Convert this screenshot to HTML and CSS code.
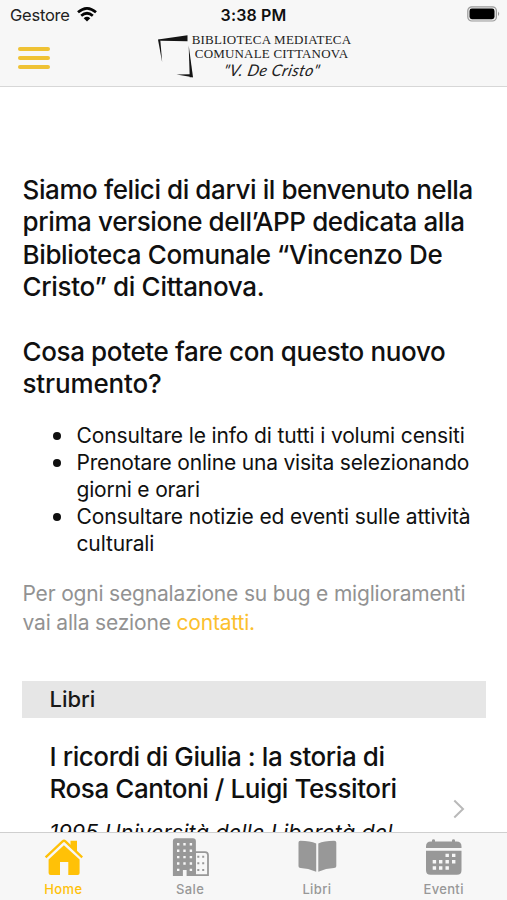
FILE: index.html
```html
<!DOCTYPE html>
<html lang="it">
<head>
<meta charset="utf-8">
<meta name="viewport" content="width=device-width, initial-scale=1">
<title>Biblioteca Comunale Cittanova</title>
<link rel="stylesheet" href="styles.css">
</head>
<body>
<header class="header">
  <div class="status">
    <div class="carrier"><span>Gestore</span>
      <svg class="wifi" width="20" height="15" viewBox="0 0 20 15"><g fill="none" stroke="#050505" stroke-width="2.7"><path d="M1 5.3Q10-2.5 19 5.3"/><path d="M4.2 8.8Q10 3.7 15.8 8.8"/></g><path d="M6.7 11.2Q10 8.5 13.3 11.2L10 14.5Z" fill="#050505"/></svg>
    </div>
    <time class="clock">3:38 PM</time>
    <svg class="battery" width="33" height="16" viewBox="0 0 33 16"><rect x=".8" y=".8" width="28.600" height="14.200" rx="4" fill="#ededed" stroke="#9b9b9b" stroke-width="1.2"/><rect x="2.500" y="2.600" width="25" height="10.600" rx="2.400"/><path d="M31 5.5q2.4 2.3 0 4.6z" fill="#999"/></svg>
  </div>
  <div class="brandbar">
    <button class="menu" aria-label="Menu"><i></i><i></i><i></i></button>
    <div class="brand">
      <svg class="mark" width="38" height="46" viewBox="0 0 38 46" fill="#151515"><path d="M1 5.500 30.500 1.300V7.300L3.500 6.700Z"/><path d="M1 5.500 3.300 6 5.200 28.500Z"/><path d="M31.700 11.500 36 43.200H32.700Z"/><path d="M19.500 40.500 33 40.200 36 43.200Z"/></svg>
      <div class="brand-text"><span class="b1">BIBLIOTECA MEDIATECA</span><span class="b2">COMUNALE CITTANOVA</span>
      <span class="b3">"V. De Cristo"</span></div>
    </div>
  </div>
</header>
<main class="content">
  <h1 class="title intro"><span class="w1">Siamo felici di darvi il benvenuto nella</span><br><span class="w2">prima versione dell’APP dedicata alla</span><br><span class="w3">Biblioteca Comunale “Vincenzo De</span><br><span class="w4">Cristo” di Cittanova.</span><br><br><span class="w5">Cosa potete fare con questo nuovo</span><br><span class="w6">strumento?</span></h1>
  <ul class="features">
    <li>Consultare le info di tutti i volumi censiti</li>
    <li class="tight">Prenotare online una visita selezionando<br>giorni e orari</li>
    <li>Consultare notizie ed eventi sulle attività<br>culturali</li>
  </ul>
  <p class="note">Per ogni segnalazione su bug e miglioramenti<br>vai alla sezione <a class="link">contatti.</a></p>
  <h2 class="section">Libri</h2>
  <article class="book">
    <div class="book-text">
      <h3 class="title book-title">I ricordi di Giulia : la storia di<br>Rosa Cantoni / Luigi Tessitori</h3>
      <p class="publisher">1995 Università delle Liberetà del</p>
    </div>
    <svg class="chevron" width="12" height="20" viewBox="0 0 12 20"><path d="M1.300 1.500 10 10 1.300 18.500" fill="none" stroke="#b9b9b9" stroke-width="2"/></svg>
  </article>
</main>
<nav class="tabs">
  <a class="tab active"><svg width="40" height="40" viewBox="0 0 40 40" fill="currentColor"><path d="M20.900 8.300 36.600 22.500V36q0 2-2 2H25.300V25H17v13H7.600q-2 0-2-2V22.500Z"/><path d="M27.500 3.800H34v12l-6.500-5.500Z"/><path d="M2.600 20.300 19.600 4.400q1.400-1.200 2.800 0L39.200 20.300" fill="none" stroke="currentColor" stroke-width="2.300"/></svg><span>Home</span></a>
  <a class="tab"><svg width="40" height="40" viewBox="0 0 40 40" fill="currentColor"><path d="M25 15.200h10q3 0 3 3v20H25Z" fill="#f7f7f7" stroke="currentColor" stroke-width="1.800"/><path d="M5.900 1.200h17q3 0 3 3V39h-9.300v-6h-3.700v6H2.900V4.200q0-3 3-3Z"/><g fill="none" stroke="#f7f7f7" stroke-width="2.400" stroke-dasharray="2.400 4"><path d="M8.200 6.100v28M14.500 6.100v24M20.900 6.100v28"/></g><g fill="none" stroke="currentColor" stroke-width="2" stroke-dasharray="2 4.600"><path d="M28.300 18.700v17M33.200 18.700v17"/></g></svg><span>Sale</span></a>
  <a class="tab"><svg width="40" height="40" viewBox="0 0 40 40" fill="currentColor"><path d="M19.200 6.500v28.200Q11 31.300 3.500 31q-2 0-2-1.800V5.500q0-1.800 2-1.700Q13 4 19.200 6.500ZM21.300 6.500v28.200Q29 31.300 37 31q2.300 0 2.300-1.800V5.500q0-1.800-2.300-1.700Q27 4 21.300 6.500Z"/></svg><span>Libri</span></a>
  <a class="tab"><svg width="40" height="40" viewBox="0 0 40 40" fill="currentColor"><path d="M2 11V9.500Q2 4.500 7 4.500h1V3.500q0-1.300 1.500-1.300T11 3.500v1h17v-1q0-1.300 1.500-1.300T31 3.500v1h1.500q5 0 5 5V11ZM2 13.700h35.500v19.500q0 4.500-4.500 4.500H6.500Q2 37.700 2 33.200Z"/><g fill="#f7f7f7"><path d="M21.500 16.700h3.400v3.400h-3.400zM28 16.700h3.400v3.400H28zM8.700 23h3.400v3.400H8.700zM15 23h3.400v3.400H15zM21.500 23h3.400v3.400h-3.400zM28 23h3.400v3.400H28zM8.700 29.300h3.400v3.400H8.700zM15 29.300h3.400v3.400H15zM21.500 29.300h3.400v3.400h-3.400z"/></g></svg><span>Eventi</span></a>
</nav>
</body>
</html>
```
FILE: styles.css
```css
* { box-sizing: border-box; }
body { margin: 0; width: 507px; height: 900px; display: flex; flex-direction: column; overflow: hidden; background: #fff; color: #101010; font-family: Inter, "Liberation Sans", sans-serif; }
.header { flex: none; height: 87px; background: #f7f7f7; border-bottom: 1px solid #d7d7d7; }
.status { height: 29px; display: grid; grid-template-columns: 1fr auto 1fr; align-items: center; padding: 0 10px 0 10px; }
.carrier { display: flex; align-items: center; gap: 7px; font-size: 16.5px; letter-spacing: -.25px; color: #222; }
.clock { font-size: 16px; font-weight: 600; letter-spacing: .15px; }
.battery { justify-self: end; margin: -2px -3px 0 0; }
.brandbar { display: flex; height: 57px; padding-left: 18px; }
.menu { width: 32px; height: 22px; margin-top: 18px; padding: 0; border: 0; background: none; display: flex; flex-direction: column; justify-content: space-between; }
.menu i { height: 4.200px; border-radius: 2px; background: #efc234; }
.brand { display: flex; margin-left: 107px; }
.mark { margin-top: 5px; margin-right: -5.500px; }
.brand-text { display: flex; flex-direction: column; align-items: center; padding-top: 4px; width: 164px; font-family: "Liberation Serif", serif; font-size: 13px; line-height: 13.500px; white-space: nowrap; color: #222; }
.b1 { letter-spacing: .24px; }
.b2 { letter-spacing: .19px; }
.b3 { font-family: Lato, sans-serif; font-style: italic; font-size: 16px; line-height: 20px; letter-spacing: .5px; transform: skewX(-12deg); }
.content { flex: 1; min-height: 0; overflow: hidden; padding: 87px 21px 0 22px; }
.title { margin: 0; font-size: 26px; line-height: 32.400px; font-weight: 500; white-space: nowrap; }
.intro { padding-left: .5px; }
.w1 { letter-spacing: -.41px; }
.w2, .w3, .w5 { letter-spacing: -.37px; }
.w4 { letter-spacing: -.3px; }
.w6 { letter-spacing: -.15px; }
.features { margin: 21px 0 0; padding-left: 54.500px; list-style: none; font-size: 21px; line-height: 27px; letter-spacing: -.135px; white-space: nowrap; }
.features li::before { content: ""; display: inline-block; width: 8px; height: 8px; margin: 0 15.500px 0 -23.500px; border-radius: 50%; background: #101010; vertical-align: 3px; }
.tight { letter-spacing: -.19px; }
.note { margin: 22px 0 0; padding-left: .5px; font-size: 21px; line-height: 29.500px; letter-spacing: -.18px; color: #929292; white-space: nowrap; }
.link { color: #fcc02d; }
.section { margin: 43px 0 0; height: 37px; padding-left: 27.500px; background: #e6e6e6; font-size: 22px; font-weight: 500; line-height: 37px; color: #181818; }
.book { display: flex; align-items: center; padding: 23px 21px 0 27.500px; height: 159px; justify-content: space-between; }
.book-text { align-self: flex-start; }
.book-title { letter-spacing: -.42px; }
.publisher { margin: 13.500px 0 0; font-size: 21.500px; line-height: 27px; letter-spacing: .15px; font-style: italic; white-space: nowrap; }
.tabs { flex: none; height: 68px; display: grid; grid-template-columns: repeat(4, 1fr); background: #f7f7f7; border-top: 1px solid #cfcfcf; }
.tab { display: flex; flex-direction: column; align-items: center; padding-top: 4px; font-size: 13px; line-height: 16px; font-weight: 500; letter-spacing: .35px; color: #989898; }
.tab span { margin-top: 4px; }
.active { color: #ffc107; }
```
